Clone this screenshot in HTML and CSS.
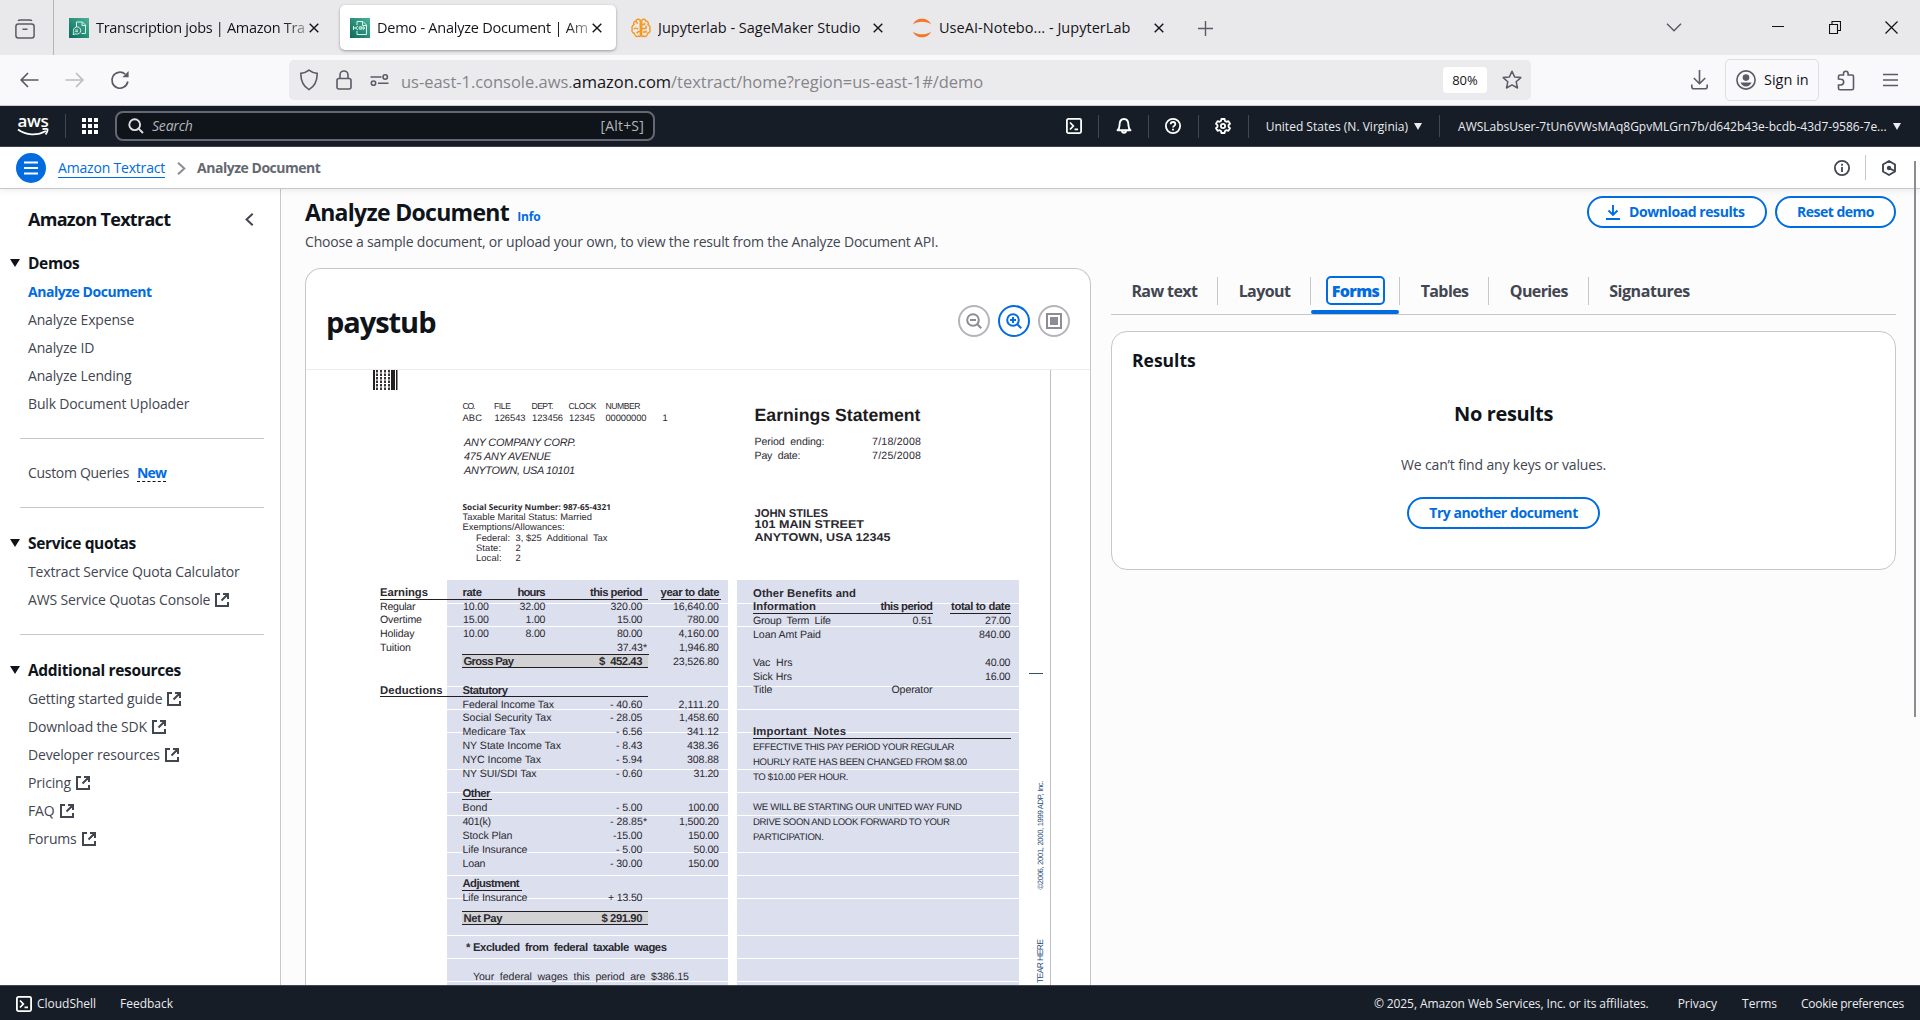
FILE: index.html
```html
<!DOCTYPE html>
<html lang="en">
<head>
<meta charset="utf-8">
<title>Demo - Analyze Document | Amazon Textract</title>
<link rel="stylesheet" href="styles.css">
</head>
<body>
<svg class="defs" aria-hidden="true">
  <symbol id="ext" viewBox="0 0 16 16"><path d="M6 2H2v12h12v-4M9 2h5v5M14 2 7.5 8.5" fill="none" stroke="currentColor" stroke-width="2"/></symbol>
  <symbol id="close" viewBox="0 0 10 10"><path d="M.7.7l8.6 8.6M9.3.7.7 9.3" fill="none" stroke="currentColor" stroke-width="1.4"/></symbol>
  <symbol id="mag" viewBox="0 0 16 16"><circle cx="6.7" cy="6.7" r="5.4" fill="none" stroke="currentColor" stroke-width="1.9"/><path d="M10.6 10.6 15 15" stroke="currentColor" stroke-width="2"/></symbol>
  <linearGradient id="green" x1="0" y1="1" x2="1" y2="0"><stop offset="0" stop-color="#0a6b5c"/><stop offset="1" stop-color="#4ab29a"/></linearGradient>
</svg>

<div class="tabstrip">
  <div class="view-button">
    <svg width="20" height="20" viewBox="0 0 20 20" fill="none" stroke="#5b5b66" stroke-width="1.5"><rect x=".9" y="5" width="18.2" height="14" rx="2.5"/><path d="M3 1.8C3.8 1 4.5.9 5.5.9h9c1 0 1.700.1 2.500.9M7.500 10.300h5"/></svg>
  </div>
  <div class="tab tab-first">
    <svg width="20" height="20" viewBox="0 0 20 20"><rect width="20" height="20" fill="url(#green)"/><g fill="none" stroke="#d8f3ea" stroke-width="1"><path d="M7.500 9V4h6l3 3v8.500h-4M13 4v3.500h3.500"/><path d="M4 16.500l.8-2.600a3.600 3.600 0 1 1 2.200 2z"/><path d="M6.200 12h2.800M6.200 13.700h2.800"/></g></svg>
    <span class="tab-label fade ls-a">Transcription jobs | Amazon Tra</span>
    <svg class="x" width="10" height="10"><use href="#close"/></svg>
  </div>
  <div class="tab tab-active">
    <svg width="20" height="20" viewBox="0 0 20 20"><rect width="20" height="20" fill="url(#green)"/><g fill="none" stroke="#d8f3ea" stroke-width="1"><path d="M7 7V3.500h6l3.500 3.500v9.500H7V13M12.500 3.500V7.500h4"/><path d="M3.500 8v4M8 8l-2.500 2L8 12M9.500 10h5M12.800 8l2 2-2 2M3.500 10h3"/><circle cx="10.500" cy="10" r="1.500"/></g></svg>
    <span class="tab-label fade ls-b">Demo - Analyze Document | Am</span>
    <svg class="x" width="10" height="10"><use href="#close"/></svg>
  </div>
  <div class="tab tab-third">
    <svg width="20" height="20" viewBox="0 0 20 20" fill="none" stroke="#f5981c" stroke-width="1.4"><path d="M9.200 2.200C8 .6 5.500 1 5.100 3 3 3 2.200 5 3 6.600.9 7.500.6 10 1.300 11c-.9 1.700 0 4 2 4.300C3.500 18 6 19.300 7.500 18c1 1 1.900.5 1.900-.5zM10.800 2.200C12 .6 14.500 1 14.900 3c2.100 0 2.900 2 2.100 3.600 2.100.9 2.400 3.400 1.700 4.400.9 1.700 0 4-2 4.300-.2 2.700-2.700 4-4.200 2.700-1 1-1.900.5-1.900-.5z"/><path d="M5 3c0 1.500.8 2.200 2 2.500M3 11c1.500-1.500 3-1 4 .3M6 15.500c0-1.500 1-2 3-2M11 6.500h2.500V4.800M15 7.500v3H11M12 14h3v-1.500"/></svg>
    <span class="tab-label ls-c">Jupyterlab - SageMaker Studio</span>
    <svg class="x" width="10" height="10"><use href="#close"/></svg>
  </div>
  <div class="tab tab-fourth">
    <svg width="20" height="20" viewBox="0 0 20 20" fill="#f37726"><path d="M.8 6.500C2.500 2.600 6 .7 10 .7s7.500 1.900 9.200 5.800C17 4.600 13.500 3.700 10 3.700S3 4.600.8 6.500zM.8 13.500C2.500 17.400 6 19.300 10 19.300s7.500-1.900 9.200-5.800C17 15.400 13.500 16.300 10 16.300S3 15.400.8 13.500z"/></svg>
    <span class="tab-label ls-d">UseAI-Notebo... - JupyterLab</span>
    <svg class="x" width="10" height="10"><use href="#close"/></svg>
  </div>
  <svg class="plus" width="15" height="15" viewBox="0 0 15 15" stroke="#5b5b66" stroke-width="1.400"><path d="M7.500 0v15M0 7.500h15"/></svg>
  <div class="window-controls">
    <svg width="16" height="9" viewBox="0 0 16 9" fill="none" stroke="#5b5b66" stroke-width="1.500"><path d="M1 .8l7 7 7-7"/></svg>
    <svg class="wc-min" width="12" height="13" viewBox="0 0 12 13" stroke="#111"><path d="M0 5.500h12"/></svg>
    <svg class="wc-max" width="12" height="13" viewBox="0 0 12 13" fill="none" stroke="#111" stroke-width="1.100"><path d="M.5 3.500h8v9h-8zM3 3.500v-3h8.500v9H8.500"/></svg>
    <svg class="wc-close" width="13" height="13" viewBox="0 0 13 13" fill="none" stroke="#111" stroke-width="1.200"><path d="M.5.5l12 12M12.500.5l-12 12"/></svg>
  </div>
</div>

<div class="toolbar">
  <div class="history">
    <svg width="19" height="16" viewBox="0 0 19 16" fill="none" stroke="#5b5b66" stroke-width="1.700"><path d="M18.500 8H1.200M8 1 1.200 8 8 15"/></svg>
    <svg width="19" height="16" viewBox="0 0 19 16" fill="none" stroke="#bdbdc2" stroke-width="1.700"><path d="M.5 8h17.300M11 1l6.800 7L11 15"/></svg>
    <svg width="20" height="20" viewBox="0 0 20 20" fill="none" stroke="#5b5b66" stroke-width="1.700"><path d="M17.800 11.500A8 8 0 1 1 15.200 4.200"/><path d="M18.600 1v6.300h-6.200z" fill="#5b5b66" stroke="none"/></svg>
  </div>
  <div class="urlbar">
    <svg width="20" height="22" viewBox="0 0 20 22" fill="none" stroke="#5b5b66" stroke-width="1.600"><path d="M10 1.200c2.500 2 5.300 3 8.200 3.200 0 7.300-2 12.500-8.200 16.200C3.800 16.900 1.800 11.700 1.800 4.400 4.700 4.200 7.500 3.200 10 1.200z"/></svg>
    <svg class="lock" width="16" height="20" viewBox="0 0 16 20" fill="none" stroke="#5b5b66" stroke-width="1.600"><rect x="1" y="8.500" width="14" height="10.500" rx="2"/><path d="M4 8.500V5a4 4 0 0 1 8 0v3.500"/></svg>
    <svg class="perm" width="19" height="12" viewBox="0 0 19 12" fill="none" stroke="#5b5b66" stroke-width="1.600"><path d="M.5 3h11M8 9.200h10.500"/><circle cx="15.200" cy="3" r="2.200"/><circle cx="3.500" cy="9.200" r="2.200"/></svg>
    <span class="url">us-east-1.console.aws.<b>amazon.com</b>/textract/home?region=us-east-1#/demo</span>
    <span class="zoom">80%</span>
    <svg class="star" width="20" height="20" viewBox="0 0 20 20" fill="none" stroke="#5b5b66" stroke-width="1.500" stroke-linejoin="round"><path d="M10 1.200l2.600 5.700 6.200.7-4.600 4.200 1.300 6.200L10 14.900 4.500 18l1.300-6.200L1.200 7.600l6.200-.7z"/></svg>
  </div>
  <div class="tools">
    <svg width="17" height="20" viewBox="0 0 17 20" fill="none" stroke="#5b5b66" stroke-width="1.600"><path d="M8.500 0v13.500M2.800 8l5.700 5.700L14.200 8M.8 14.500v2.200c0 1.200.8 2 2 2h11.400c1.200 0 2-.8 2-2v-2.200"/></svg>
    <span class="signin"><svg width="20" height="20" viewBox="0 0 20 20" fill="none" stroke="#5b5b66" stroke-width="1.600"><circle cx="10" cy="10" r="9.100"/><circle cx="10" cy="7.600" r="3.300" fill="#5b5b66" stroke="none"/><path d="M4.500 12.500h11c-.8 2.400-2.800 3.900-5.500 3.900s-4.700-1.500-5.500-3.900z" fill="#5b5b66" stroke="none"/></svg>Sign in</span>
    <svg class="puzzle" width="18" height="21" viewBox="0 0 18 21" fill="none" stroke="#5b5b66" stroke-width="1.600"><path d="M1.500 9V6.500c0-1 .5-1.500 1.500-1.500h3.500V3.500a2.300 2.300 0 0 1 4.600 0V5H15c1 0 1.500.5 1.500 1.500v11.700c0 1-.5 1.500-1.500 1.500H3c-1 0-1.500-.5-1.500-1.500V15H3.800a2.600 2.600 0 0 0 0-5.800z"/></svg>
    <svg width="15" height="14" viewBox="0 0 15 14" stroke="#5b5b66" stroke-width="1.500"><path d="M0 1.500h15M0 7h15M0 12.500h15"/></svg>
  </div>
</div>

<header class="awsnav">
  <div class="awslogo">aws<svg width="32" height="9" viewBox="0 0 32 9" fill="none" stroke="#fff" stroke-width="1.800"><path d="M1 1.500c8 6 19 6.500 28 1.500M25.500 1.200c2-.4 4-.5 5 0 .3 1.500-.6 3.600-1.900 5.300" /></svg></div>
  <i class="navdiv"></i>
  <svg class="grid" width="16" height="16" viewBox="0 0 16 16" fill="#fff"><path d="M0 0h4v4H0zM6 0h4v4H6zM12 0h4v4h-4zM0 6h4v4H0zM6 6h4v4H6zM12 6h4v4h-4zM0 12h4v4H0zM6 12h4v4H6zM12 12h4v4h-4z"/></svg>
  <div class="search"><svg width="16" height="16"><use href="#mag"/></svg><em>Search</em><span>[Alt+S]</span></div>
  <div class="navicons">
    <span><svg width="16" height="16" viewBox="0 0 16 16" fill="none" stroke="#fff" stroke-width="1.800"><rect x=".9" y=".9" width="14.200" height="14.200" rx="1.500"/><path d="M4 4.500 7.300 8 4 11.500M8.500 11.300H12"/></svg></span>
    <span><svg width="16" height="16" viewBox="0 0 16 16" fill="none" stroke="#fff" stroke-width="1.900" stroke-linejoin="round"><path d="M1.500 12.200h13c-1.500-1.300-2-2.500-2-4.700C12.500 3.500 11 1 8 1S3.500 3.500 3.500 7.500c0 2.200-.5 3.400-2 4.700zM6 12.500a2 2.300 0 0 0 4 0"/></svg></span>
    <span><svg width="16" height="16" viewBox="0 0 16 16" fill="none" stroke="#fff" stroke-width="1.800"><circle cx="8" cy="8" r="7.100"/><path d="M5.700 6.300C5.700 4.900 6.700 4 8 4s2.300.9 2.300 2.200C10.300 7.800 8 7.900 8 9.600M8 10.700v1.900"/></svg></span>
    <span><svg width="16" height="16" viewBox="0 0 16 16" fill="none" stroke="#fff" stroke-width="1.800" stroke-linejoin="round"><path d="M6.400 1h3.200l.4 2 1.400.8 2-.7L15 5.800 13.500 7.200v1.600L15 10.200l-1.600 2.700-2-.7-1.400.8-.4 2H6.400L6 13l-1.400-.8-2 .7L1 10.200l1.500-1.400V7.200L1 5.800l1.600-2.700 2 .7L6 3z"/><circle cx="8" cy="8" r="2.100"/></svg></span>
  </div>
  <span class="region">United States (N. Virginia)<i class="tri"></i></span>
  <span class="account">AWSLabsUser-7tUn6VWsMAq8GpvMLGrn7b/d642b43e-bcdb-43d7-9586-7e...<i class="tri"></i></span>
</header>

<div class="crumbs">
  <span class="burger"><svg width="14" height="14" viewBox="0 0 14 14" stroke="#fff" stroke-width="2"><path d="M0 1.500h14M0 7h14M0 12.500h14"/></svg></span>
  <a class="crumb-link">Amazon Textract</a>
  <svg class="crumb-sep" width="9" height="13" viewBox="0 0 9 13" fill="none" stroke="#8c8c94" stroke-width="2"><path d="M1 .8l6.300 5.700L1 12.200"/></svg>
  <b>Analyze Document</b>
  <svg class="info-icon" width="16" height="16" viewBox="0 0 16 16" fill="none" stroke="#424650" stroke-width="1.800"><circle cx="8" cy="8" r="7.100"/><path d="M8 7v5M8 3.800v2"/></svg>
  <i class="crumb-div"></i>
  <svg width="14" height="16" viewBox="0 0 14 16" fill="none" stroke="#424650" stroke-width="1.900" stroke-linejoin="round"><path d="M7 1l6 3.500v7L7 15l-6-3.500v-7z"/><circle cx="7" cy="8" r="2.200" fill="#424650" stroke="none"/><path d="M7 8l5.500 3"/></svg>
</div>

<div class="body">
  <nav class="sidebar">
    <div class="side-title">Amazon Textract<svg width="9" height="13" viewBox="0 0 9 13" fill="none" stroke="#424650" stroke-width="2"><path d="M7.700.8 1.600 6.500l6.100 5.700"/></svg></div>
    <h4>Demos</h4>
    <ul>
      <li class="current">Analyze Document</li>
      <li>Analyze Expense</li>
      <li>Analyze ID</li>
      <li>Analyze Lending</li>
      <li>Bulk Document Uploader</li>
    </ul>
    <hr>
    <ul><li class="custom">Custom Queries <span class="new">New</span></li></ul>
    <hr>
    <h4>Service quotas</h4>
    <ul>
      <li>Textract Service Quota Calculator</li>
      <li>AWS Service Quotas Console<svg><use href="#ext"/></svg></li>
    </ul>
    <hr>
    <h4>Additional resources</h4>
    <ul>
      <li>Getting started guide<svg><use href="#ext"/></svg></li>
      <li>Download the SDK<svg><use href="#ext"/></svg></li>
      <li>Developer resources<svg><use href="#ext"/></svg></li>
      <li>Pricing<svg><use href="#ext"/></svg></li>
      <li>FAQ<svg><use href="#ext"/></svg></li>
      <li>Forums<svg><use href="#ext"/></svg></li>
    </ul>
  </nav>

  <main>
    <div class="page-head">
      <div>
        <h1>Analyze Document <a>Info</a></h1>
        <p>Choose a sample document, or upload your own, to view the result from the Analyze Document API.</p>
      </div>
      <div class="actions">
        <button class="btn"><svg width="14" height="15" viewBox="0 0 14 15" fill="none" stroke="currentColor" stroke-width="1.900"><path d="M7 0v10M2.500 5.500 7 10l4.500-4.500M0 14h14"/></svg>Download results</button>
        <button class="btn">Reset demo</button>
      </div>
    </div>
    <div class="columns">
      <section class="doc-card">
        <div class="doc-head">
          <h2>paystub</h2>
          <div class="zoomers">
            <span><svg width="16" height="16" viewBox="0 0 16 16" fill="none" stroke="currentColor" stroke-width="2"><circle cx="7" cy="7" r="5.800"/><path d="M11 11l4.300 4.300M4 7h6"/></svg></span>
            <span class="on"><svg width="16" height="16" viewBox="0 0 16 16" fill="none" stroke="currentColor" stroke-width="2"><circle cx="7" cy="7" r="5.800"/><path d="M11 11l4.300 4.300M4 7h6M7 4v6"/></svg></span>
            <span><svg width="16" height="16" viewBox="0 0 16 16" fill="none" stroke="currentColor" stroke-width="2"><path d="M1 1h14v14H1z"/><path d="M4 4h8v8H4z" fill="currentColor" stroke="none"/></svg></span>
          </div>
        </div>
        <svg class="paper" width="783" height="615" viewBox="306 370 783 615">
          <g fill="#231f20">
            <path d="M373 370h2v20h-2zM391 370h4v20h-4zM396 370h1.500v20H396z"/>
            <path d="M377 370v20M381 370v20M385 370v20M389 370v20" stroke="#231f20" stroke-width="1.800" stroke-dasharray="2.500 1"/>
          </g>
          <path d="M1050.500 370v615" stroke="#bdbdc4"/>
          <path d="M447 580h281v405H447zM737 580h282v405H737z" fill="#dce0ee"/>
          <path d="M447 603.500h281m9 0h282M447 626.500h281m9 0h282M447 686.500h281m9 0h282M447 709.500h281m9 0h282M447 732.500h281m9 0h282M447 769.500h281m9 0h282M447 792.500h281m9 0h282M447 815.500h281m9 0h282M447 852.500h281m9 0h282M447 875.500h281m9 0h282M447 898.500h281m9 0h282M447 935.500h281m9 0h282M447 958.500h281m9 0h282M447 981.500h281m9 0h282" stroke="#fff"/>
          <path d="M462 654h186v13.500H462zM462 911.500h186V925H462z" fill="#d2d2d4"/>
          <path d="M380 599.500h268M661 599.500h60M462 654.500h187M462 667.500h186M380 696.500h268M462 799.500h30M462 890.500h60M462 911.500h186M462 924.500h186M753 613.500h180M950 613.500h61M753 738.500h258" stroke="#231f20"/>
          <path d="M1029 673.500h14" stroke="#33506f"/>
          <g class="t9">
            <g class="t86"><text x="462.500" y="409" textLength="13">CO.</text><text x="494" y="409" textLength="17">FILE</text><text x="531.500" y="409" textLength="22">DEPT.</text><text x="568.500" y="409" textLength="28">CLOCK</text><text x="605.500" y="409" textLength="35">NUMBER</text></g>
            <text x="462.500" y="421" textLength="19.500">ABC</text><text x="494.500" y="421" textLength="31">126543</text><text x="532" y="421" textLength="31">123456</text><text x="569" y="421" textLength="26">12345</text><text x="605.500" y="421" textLength="41">00000000</text><text x="662.500" y="421">1</text>
            <text x="462.500" y="520" textLength="129.500">Taxable Marital Status: Married</text>
            <text x="462.500" y="530" textLength="102">Exemptions/Allowances:</text>
            <text x="476" y="541" textLength="34">Federal:</text><text x="515.500" y="541" textLength="92" class="pre">3, $25  Additional  Tax</text>
            <text x="476" y="551" textLength="25">State:</text><text x="515.500" y="551">2</text>
            <text x="476" y="561" textLength="25.500">Local:</text><text x="515.500" y="561">2</text>
          </g>
          <text class="mont" x="462.500" y="510" textLength="148.500">Social Security Number: 987-65-4321</text>
          <g class="it">
            <text x="464" y="446" textLength="112">ANY COMPANY CORP.</text><text x="464" y="460" textLength="87">475 ANY AVENUE</text><text x="464" y="474" textLength="111">ANYTOWN, USA 10101</text>
          </g>
          <text class="es" x="754.500" y="421" textLength="166">Earnings Statement</text>
          <g class="t10">
            <text class="pre" x="754.500" y="445" textLength="70">Period  ending:</text><text x="872" y="445" textLength="49">7/18/2008</text>
            <text class="pre" x="754.500" y="459" textLength="46">Pay  date:</text><text x="872" y="459" textLength="49">7/25/2008</text>
          </g>
          <g class="b11">
            <text x="754.500" y="517" textLength="73.500">JOHN STILES</text><text x="754.500" y="528" textLength="109.500" lengthAdjust="spacingAndGlyphs">101 MAIN STREET</text><text x="754.500" y="541" textLength="136" lengthAdjust="spacingAndGlyphs">ANYTOWN, USA 12345</text>
            <text x="380" y="596" textLength="48">Earnings</text><text x="462.500" y="596" textLength="19.500">rate</text><text x="517.500" y="596" textLength="28">hours</text><text x="590" y="596" textLength="52.500">this period</text><text x="660.500" y="596" textLength="59">year to date</text>
            <text x="463.500" y="665" textLength="50.500">Gross Pay</text><text class="pre" x="599" y="665" textLength="43.500">$  452.43</text>
            <text x="380" y="694" textLength="62.500">Deductions</text><text x="462.500" y="694" textLength="45.500">Statutory</text>
            <text x="462.500" y="797" textLength="28">Other</text><text x="462.500" y="887" textLength="57">Adjustment</text>
            <text x="463.500" y="922" textLength="39">Net Pay</text><text x="601.500" y="922" textLength="41">$ 291.90</text>
            <text x="466" y="951">*</text><text class="pre" x="473" y="951" textLength="194">Excluded  from  federal  taxable  wages</text>
            <text x="753" y="597" textLength="103">Other Benefits and</text><text x="753" y="610" textLength="63">Information</text><text x="880.500" y="610" textLength="52.500">this period</text><text x="951" y="610" textLength="59.500">total to date</text>
            <text class="pre" x="753" y="735" textLength="93">Important  Notes</text>
          </g>
          <g class="t10">
            <text x="380" y="610" textLength="35.500">Regular</text><text x="463" y="610" textLength="26">10.00</text><text x="519.500" y="610" textLength="26">32.00</text><text x="610.500" y="610" textLength="32">320.00</text><text x="673" y="610" textLength="46">16,640.00</text>
            <text x="380" y="623" textLength="42">Overtime</text><text x="463" y="623" textLength="26">15.00</text><text x="525.500" y="623" textLength="20">1.00</text><text x="617" y="623" textLength="25.500">15.00</text><text x="687" y="623" textLength="32">780.00</text>
            <text x="380" y="637" textLength="34.500">Holiday</text><text x="463" y="637" textLength="26">10.00</text><text x="525.500" y="637" textLength="20">8.00</text><text x="617" y="637" textLength="25.500">80.00</text><text x="678.500" y="637" textLength="40.500">4,160.00</text>
            <text x="380" y="651" textLength="31">Tuition</text><text x="617" y="651" textLength="30">37.43*</text><text x="679" y="651" textLength="40">1,946.80</text>
            <text x="673" y="665" textLength="46">23,526.80</text>
            <text x="462.500" y="708" textLength="91.500">Federal Income Tax</text><text x="610" y="708" textLength="32.500">- 40.60</text><text x="678.500" y="708" textLength="40.500">2,111.20</text>
            <text x="462.500" y="721" textLength="89">Social Security Tax</text><text x="610" y="721" textLength="32.500">- 28.05</text><text x="679" y="721" textLength="40">1,458.60</text>
            <text x="462.500" y="735" textLength="63">Medicare Tax</text><text x="616" y="735" textLength="26.500">- 6.56</text><text x="687" y="735" textLength="32">341.12</text>
            <text x="462.500" y="749" textLength="98.500">NY State Income Tax</text><text x="616" y="749" textLength="26.500">- 8.43</text><text x="687" y="749" textLength="32">438.36</text>
            <text x="462.500" y="763" textLength="78.500">NYC Income Tax</text><text x="616" y="763" textLength="26.500">- 5.94</text><text x="687" y="763" textLength="32">308.88</text>
            <text x="462.500" y="777" textLength="74">NY SUI/SDI Tax</text><text x="616" y="777" textLength="26.500">- 0.60</text><text x="693.500" y="777" textLength="25.500">31.20</text>
            <text x="462.500" y="811" textLength="25">Bond</text><text x="616" y="811" textLength="26.500">- 5.00</text><text x="688" y="811" textLength="31">100.00</text>
            <text x="462.500" y="825" textLength="28.500">401(k)</text><text x="610" y="825" textLength="37">- 28.85*</text><text x="679" y="825" textLength="40">1,500.20</text>
            <text x="462.500" y="839" textLength="50">Stock Plan</text><text x="613" y="839" textLength="29.500">-15.00</text><text x="688" y="839" textLength="31">150.00</text>
            <text x="462.500" y="853" textLength="65">Life Insurance</text><text x="616" y="853" textLength="26.500">- 5.00</text><text x="693.500" y="853" textLength="25.500">50.00</text>
            <text x="462.500" y="867" textLength="23">Loan</text><text x="610" y="867" textLength="32.500">- 30.00</text><text x="688" y="867" textLength="31">150.00</text>
            <text x="462.500" y="901" textLength="65">Life Insurance</text><text x="608" y="901" textLength="34.500">+ 13.50</text>
            <text class="pre" x="473" y="980" textLength="216">Your  federal  wages  this  period  are  $386.15</text>
            <text class="pre" x="753" y="624" textLength="78">Group  Term  Life</text><text x="912.500" y="624" textLength="20">0.51</text><text x="985" y="624" textLength="25.500">27.00</text>
            <text x="753" y="638" textLength="68">Loan Amt Paid</text><text x="979" y="638" textLength="31.500">840.00</text>
            <text class="pre" x="753" y="666" textLength="39.500">Vac  Hrs</text><text x="985" y="666" textLength="25.500">40.00</text>
            <text x="753" y="680" textLength="39">Sick Hrs</text><text x="985" y="680" textLength="25.500">16.00</text>
            <text x="753" y="693" textLength="19.500">Title</text><text x="891.500" y="693" textLength="41">Operator</text>
          </g>
          <g class="t95">
            <text x="753" y="750" textLength="201.500">EFFECTIVE THIS PAY PERIOD YOUR REGULAR</text>
            <text x="753" y="765" textLength="214">HOURLY RATE HAS BEEN CHANGED FROM $8.00</text>
            <text x="753" y="780" textLength="95.500">TO $10.00 PER HOUR.</text>
            <text x="753" y="810" textLength="209">WE WILL BE STARTING OUR UNITED WAY FUND</text>
            <text x="753" y="825" textLength="197">DRIVE SOON AND LOOK FORWARD TO YOUR</text>
            <text x="753" y="840" textLength="71">PARTICIPATION.</text>
          </g>
          <g class="edge">
            <text transform="translate(1042.500 889.500) rotate(-90)" textLength="109">©2006, 2001, 2000, 1999 ADP, Inc.</text>
            <text class="tear" transform="translate(1042.500 983) rotate(-90)" textLength="44">TEAR HERE</text>
          </g>
        </svg>
      </section>

      <section class="results">
        <div class="rtabs">
          <span>Raw text</span><span>Layout</span><span class="sel"><b>Forms</b></span><span>Tables</span><span>Queries</span><span>Signatures</span>
        </div>
        <div class="rcard">
          <h3>Results</h3>
          <div class="empty">
            <h2>No results</h2>
            <p>We can’t find any keys or values.</p>
            <button class="btn">Try another document</button>
          </div>
        </div>
      </section>
    </div>
  </main>
  <i class="scrollbar"></i>
</div>

<footer>
  <svg width="16" height="16" viewBox="0 0 16 16" fill="none" stroke="#fff" stroke-width="1.800"><rect x=".9" y=".9" width="14.200" height="14.200" rx="1.500"/><path d="M4 4.500 7.300 8 4 11.500M8.500 11.300H12"/></svg>
  <span class="cs">CloudShell</span><span>Feedback</span>
  <span class="copy">© 2025, Amazon Web Services, Inc. or its affiliates.</span>
  <span class="privacy">Privacy</span><span class="terms">Terms</span><span class="cookies">Cookie preferences</span>
</footer>
</body>
</html>
```
FILE: styles.css
```css
* { box-sizing: border-box; }
body { margin: 0; width: 1920px; height: 1020px; overflow: hidden; display: flex; flex-direction: column; font: 14px/20px "Open Sans", "Noto Sans", sans-serif; letter-spacing: -.19px; color: #424650; background: #fcfcfd; }
h1, h2, h3, h4, p, ul { margin: 0; padding: 0; list-style: none; }
svg { flex: none; display: block; }
.defs { position: absolute; width: 0; height: 0; }

/* browser tabs */
.tabstrip { flex: none; height: 55px; background: #e9e9eb; display: flex; align-items: center; color: #15141a; font-size: 14.500px; letter-spacing: 0; }
.view-button { width: 54px; height: 55px; padding: 19px 0 0 15px; border-right: 1px solid #b4b4b8; }
.tab { height: 45px; display: flex; align-items: center; padding-left: 10px; border-radius: 5px; }
.tab-label { margin-left: 7px; padding-top: 1px; white-space: nowrap; overflow: hidden; }
.tab .x { margin-left: auto; }
.tab-first { width: 277px; margin-left: 5px; padding-right: 17px; }
.tab-active { width: 276px; margin-left: 4px; padding-right: 14px; background: #fff; box-shadow: 0 1px 3px rgba(0,0,0,.35); }
.tab-third { width: 277px; margin-left: 5px; padding-right: 15px; }
.tab-fourth { width: 276px; margin-left: 4px; padding-right: 14px; }
.fade { -webkit-mask-image: linear-gradient(90deg, #000 90%, transparent 106%); mask-image: linear-gradient(90deg, #000 90%, transparent 106%); }
.ls-a { letter-spacing: -.29px; }
.ls-b { letter-spacing: -.24px; }
.ls-c { letter-spacing: -.01px; }
.ls-d { letter-spacing: .04px; }
.plus { margin: 2px 0 0 20px; }
.window-controls { margin-left: auto; display: flex; align-items: center; padding-right: 22px; }
.wc-min { margin-left: 90px; }
.wc-max { margin-left: 45px; }
.wc-close { margin-left: 44px; }

/* browser toolbar */
.toolbar { flex: none; height: 51px; background: #f9f9fb; border-bottom: 1px solid #ccccd0; display: flex; align-items: center; }
.history { display: flex; align-items: center; gap: 26px; padding-left: 20px; width: 289px; }
.urlbar { width: 1242px; height: 40px; background: #ebebed; border-radius: 5px; display: flex; align-items: center; padding: 0 9px 0 10px; }
.lock { margin-left: 17px; }
.perm { margin-left: 18px; }
.url { margin-left: 12px; font-size: 16.500px; letter-spacing: -.03px; color: #85858a; padding-top: 3px; }
.url b { font-weight: 400; color: #15141a; }
.zoom { margin-left: auto; width: 44px; height: 26px; line-height: 27px; background: #fff; border-radius: 4px; text-align: center; font-size: 13px; letter-spacing: 0; color: #15141a; }
.star { margin-left: 15px; }
.tools { margin-left: auto; display: flex; align-items: center; padding-right: 22px; }
.signin { margin-left: 17px; width: 94px; height: 42px; border: 1px solid #dfdfe3; border-radius: 5px; display: flex; align-items: center; gap: 8px; padding-left: 10px; font-size: 14.500px; color: #15141a; letter-spacing: 0; white-space: nowrap; }
.puzzle { margin: 0 28px 0 18px; }

/* console navigation */
.awsnav { flex: none; height: 41px; background: #161d26; border-bottom: 1px solid #424650; display: flex; align-items: center; color: #ebebf0; }
.awslogo { margin-left: 17px; width: 32px; text-align: center; color: #fff; font: 600 17px/12px "Open Sans", sans-serif; letter-spacing: -.3px; }
.awslogo svg { margin-top: 1px; }
.navdiv { width: 1px; height: 24px; margin-left: 16px; background: #424650; }
.grid { margin-left: 16px; }
.search { margin-left: 17px; width: 540px; height: 30px; border: 2px solid #656871; border-radius: 8px; background: #0f141a; display: flex; align-items: center; padding: 0 9px 0 11px; color: #b4b4bb; }
.search svg { color: #dedee3; }
.search em { margin-left: 8px; }
.search span { margin-left: auto; letter-spacing: .2px; }
.navicons { display: flex; margin-left: 394.500px; }
.navicons span { width: 49.800px; height: 23px; display: flex; align-items: center; justify-content: center; border-right: 1px solid #424650; }
.region, .account { display: flex; align-items: center; font-size: 12px; font-weight: 500; letter-spacing: .01px; white-space: nowrap; padding-top: 1px; }
.region { margin-left: 17px; height: 22px; padding-right: 17px; border-right: 1px solid #424650; }
.account { margin-left: 18px; letter-spacing: .01px; }
.tri { width: 0; height: 0; border: 4.500px solid transparent; border-top: 7px solid #ebebf0; border-bottom: 0; margin-left: 6px; }

/* breadcrumb bar */
.crumbs { flex: none; height: 42px; background: #fff; border-bottom: 1px solid #c6c6cd; display: flex; align-items: center; padding: 0 24px 0 16px; position: relative; z-index: 1; box-shadow: 0 2px 6px rgba(15,20,26,.07); }
.burger { width: 30px; height: 30px; border-radius: 50%; background: #006ce0; display: grid; place-items: center; }
.crumb-link { margin: 2px 0 0 12px; line-height: 18px; color: #006ce0; border-bottom: 1px solid #006ce0; }
.crumb-sep { margin: 1px 0 0 12px; }
.crumbs b { margin: 1px 0 0 11px; color: #656871; letter-spacing: -.48px; }
.info-icon { margin-left: auto; }
.crumb-div { width: 1px; height: 25px; margin: 0 16px 0 15px; background: #c6c6cd; }

.body { flex: 1; min-height: 0; display: flex; position: relative; }
.sidebar { flex: none; width: 281px; background: #fff; border-right: 1px solid #c6c6cd; letter-spacing: -.16px; }
.side-title { height: 60px; display: flex; align-items: center; justify-content: space-between; padding: 0 26px 0 28px; font-size: 18px; font-weight: 700; letter-spacing: -.7px; color: #0f141a; }
.sidebar h4 { height: 29px; line-height: 28px; display: flex; align-items: center; padding: 0 0 1px 10px; gap: 8px; font-size: 15.500px; letter-spacing: -.35px; color: #0f141a; }
.sidebar h4::before { content: ""; border: 5px solid transparent; border-top: 8px solid #0f141a; border-bottom: 0; }
.sidebar li { height: 28px; padding-left: 28px; display: flex; align-items: center; white-space: nowrap; }
.sidebar li svg { width: 16px; height: 16px; margin-left: 4px; }
.sidebar .current { color: #006ce0; font-weight: 700; letter-spacing: -.46px; }
.sidebar .custom { letter-spacing: -.3px; }
.new { margin-left: 8px; color: #006ce0; font-weight: 700; letter-spacing: -.8px; line-height: 17px; border-bottom: 1px dashed #0f141a; }
.sidebar hr { margin: 20px 16px 21px 20px; border: 0; border-top: 1px solid #c6c6cd; }
.sidebar hr:first-of-type { margin-bottom: 20px; }

main { flex: none; width: 1615px; padding: 7px 0 0 24px; overflow: hidden; }
.page-head { display: flex; justify-content: space-between; height: 72px; }
h1 { height: 36px; font-size: 23px; line-height: 32px; letter-spacing: -.7px; color: #0f141a; }
h1 a { font-size: 12px; letter-spacing: -.2px; color: #006ce0; margin-left: 3px; }
.page-head p { letter-spacing: -.19px; }
.actions { display: flex; gap: 8px; }
.btn { height: 32px; border: 2px solid #006ce0; border-radius: 20px; background: #fff; color: #006ce0; font: 700 14px/20px "Open Sans", sans-serif; letter-spacing: -.43px; padding: 0 20px; display: flex; align-items: center; white-space: nowrap; }
.actions .btn:first-child { width: 180px; padding: 0 17px; gap: 9px; letter-spacing: -.42px; }
.btn svg { margin-top: 1px; }
.actions .btn:last-child { width: 121px; letter-spacing: -.5px; }
.columns { display: flex; gap: 20px; }
.doc-card { width: 786px; height: 717px; border: 1px solid #c6c6cd; border-bottom: 0; border-radius: 16px 16px 0 0; background: #fff; }
.doc-head { height: 101px; border-bottom: 1px solid #ebebf0; display: flex; justify-content: space-between; padding: 0 20px; }
.doc-head h2 { margin-top: 35px; font-size: 29px; line-height: 35px; height: 35px; letter-spacing: -1.050px; color: #0f141a; }
.zoomers { display: flex; gap: 8px; padding-top: 36px; }
.zoomers span { width: 32px; height: 32px; border: 2px solid #b4b4bb; border-radius: 50%; color: #8c8c94; display: grid; place-items: center; }
.zoomers .on { border-color: #006ce0; color: #006ce0; }

.paper { font-family: "Liberation Sans", Arial, sans-serif; letter-spacing: 0; fill: #2b2930; text-rendering: geometricPrecision; }
.paper .pre { white-space: pre; }
.t9 { font-size: 9.400px; }
.t86 { font-size: 8.600px; }
.t10 { font-size: 10.600px; }
.t95 { font-size: 9.600px; }
.b11 { font-size: 11.300px; font-weight: 700; }
.it { font-size: 10.900px; font-style: italic; }
.es { font-size: 17.700px; font-weight: 700; fill: #1d1b20; }
.mont { font: 700 8.200px "Open Sans", sans-serif; }
.edge { font-size: 7.700px; fill: #264a78; }
.edge .tear { font-size: 8.500px; }

.results { width: 785px; padding-top: 8px; }
.rtabs { height: 39px; border-bottom: 1px solid #c6c6cd; display: flex; font-size: 16px; font-weight: 700; letter-spacing: -.6px; }
.rtabs span { height: 28px; line-height: 29px; padding: 0 20px 0 20.400px; border-right: 1px solid #c6c6cd; position: relative; white-space: nowrap; margin-top: 1px; }
.rtabs span:last-child { border: 0; letter-spacing: -.45px; }
.rtabs .sel { color: #006ce0; }
.rtabs b { display: inline-block; margin: -1px -6px 0; padding: 0 4px; line-height: 26px; height: 29px; border: 2px solid #006ce0; border-radius: 5px; }
.rtabs .sel::after { content: ""; position: absolute; left: 0; right: 0; top: 33px; height: 4px; border-radius: 2px; background: #006ce0; }
.rcard { margin-top: 16px; height: 239px; border: 1px solid #c6c6cd; border-radius: 16px; background: #fff; padding: 16px 20px; }
.rcard h3 { font-size: 17.500px; line-height: 25px; height: 24px; color: #0f141a; letter-spacing: 0; }
.empty { display: flex; flex-direction: column; align-items: center; }
.empty h2 { margin-top: 28px; font-size: 20px; line-height: 28px; color: #0f141a; letter-spacing: -.36px; }
.empty p { margin: 27px 0 22px; letter-spacing: -.15px; }

.scrollbar { position: absolute; left: 1914px; top: -28px; width: 2px; height: 556px; background: #8c8c92; z-index: 2; }

footer { flex: none; height: 35px; background: #161d26; color: #ebebf0; font-size: 12px; letter-spacing: -.02px; display: flex; align-items: center; padding: 1px 16px 0; border-top: 1px solid #424650; white-space: nowrap; }
.cs { margin: 0 24px 0 5px; }
.copy { margin-left: auto; letter-spacing: -.1px; }
.privacy { margin-left: 29px; }
.terms { margin: 0 24px 0 25px; }
.cookies { letter-spacing: -.29px; }
```
